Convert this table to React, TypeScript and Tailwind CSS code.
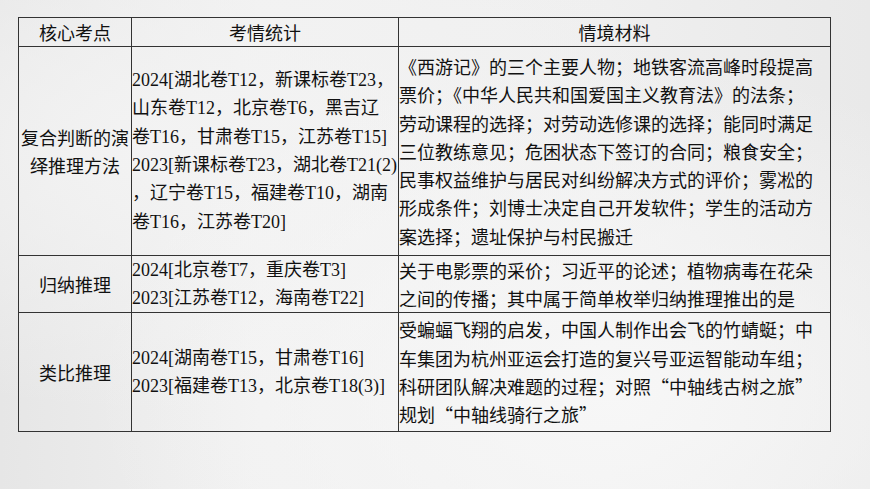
const cellBase =
  "border-r border-b border-[#333] flex items-center text-[18px] leading-[28.3px] text-[#111]";

const headers = ["核心考点", "考情统计", "情境材料"];

const rows: { point: string[]; stats: string[]; material: string[] }[] = [
  {
    point: ["复合判断的演", "绎推理方法"],
    stats: [
      "2024[湖北卷T12，新课标卷T23，",
      "山东卷T12，北京卷T6，黑吉辽",
      "卷T16，甘肃卷T15，江苏卷T15]",
      "2023[新课标卷T23，湖北卷T21(2)",
      "，辽宁卷T15，福建卷T10，湖南",
      "卷T16，江苏卷T20]",
    ],
    material: [
      "《西游记》的三个主要人物；地铁客流高峰时段提高",
      "票价；《中华人民共和国爱国主义教育法》的法条；",
      "劳动课程的选择；对劳动选修课的选择；能同时满足",
      "三位教练意见；危困状态下签订的合同；粮食安全；",
      "民事权益维护与居民对纠纷解决方式的评价；雾凇的",
      "形成条件；刘博士决定自己开发软件；学生的活动方",
      "案选择；遗址保护与村民搬迁",
    ],
  },
  {
    point: ["归纳推理"],
    stats: ["2024[北京卷T7，重庆卷T3]", "2023[江苏卷T12，海南卷T22]"],
    material: [
      "关于电影票的采价；习近平的论述；植物病毒在花朵",
      "之间的传播；其中属于简单枚举归纳推理推出的是",
    ],
  },
  {
    point: ["类比推理"],
    stats: ["2024[湖南卷T15，甘肃卷T16]", "2023[福建卷T13，北京卷T18(3)]"],
    material: [
      "受蝙蝠飞翔的启发，中国人制作出会飞的竹蜻蜓；中",
      "车集团为杭州亚运会打造的复兴号亚运智能动车组；",
      "科研团队解决难题的过程；对照“中轴线古树之旅”",
      "规划“中轴线骑行之旅”",
    ],
  },
];

function Lines({ lines, center }: { lines: string[]; center?: boolean }) {
  return (
    <div className={center ? "w-full text-center" : "w-full"}>
      {lines.map((l, i) => (
        <div key={i} className="whitespace-nowrap">
          {l}
        </div>
      ))}
    </div>
  );
}

export default function App() {
  return (
    <div className="w-[870px] h-[489px] overflow-hidden bg-[#eeeeee] bg-[radial-gradient(ellipse_at_70%_80%,#f7f7f7_0%,transparent_60%),radial-gradient(ellipse_at_20%_30%,#f3f3f3_0%,transparent_55%),linear-gradient(90deg,#e6e6e6,#f1f1f1_30%,#efefef_70%,#e9e9e9)] pt-[17px] pl-[18px]">
      <div className="grid grid-cols-[113px_267px_432px] grid-rows-[29px_209px_57px_119px] w-[813px] border-l border-t border-[#333] font-['Noto_Sans_CJK_SC',sans-serif]">
        {headers.map((h) => (
          <div key={h} className={`${cellBase} justify-center`}>
            {h}
          </div>
        ))}
        {rows.map((r, i) => (
          <div key={i} className="contents">
            <div className={cellBase}>
              <Lines lines={r.point} center />
            </div>
            <div
              className={`${cellBase} font-['Liberation_Serif','Noto_Sans_CJK_SC',serif]`}
            >
              <Lines lines={r.stats} />
            </div>
            <div className={cellBase}>
              <Lines lines={r.material} />
            </div>
          </div>
        ))}
      </div>
    </div>
  );
}
